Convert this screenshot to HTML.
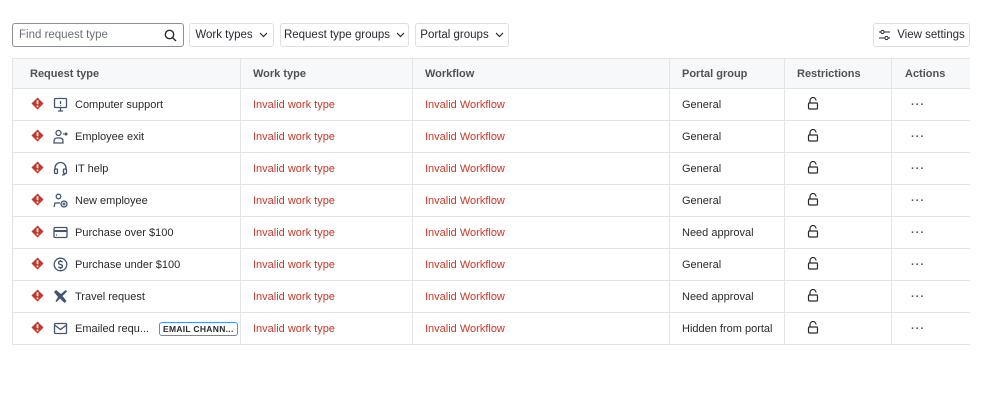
<!DOCTYPE html>
<html><head><meta charset="utf-8"><style>
*{box-sizing:border-box;margin:0;padding:0}
body{width:999px;height:407px;background:#fff;font-family:"Liberation Sans",sans-serif;font-size:11px;color:#292a2e;position:relative;overflow:hidden}
.btn{position:absolute;top:23px;height:24px;border:1px solid #dcdfe4;border-radius:3px;display:flex;align-items:center;justify-content:center;padding:0 4px;font-size:11.5px;color:#292a2e;white-space:nowrap}
.btn svg{margin-left:6px;flex:none}
.search{position:absolute;left:12px;top:23px;width:172px;height:24px;border:1px solid #8c8f97;border-radius:3px;display:flex;align-items:center;padding:0 6px;color:#6b6e76;font-size:11.5px;white-space:nowrap}
table{position:absolute;left:12px;top:58px;width:958px;border-collapse:collapse;table-layout:fixed}
th{height:30px;background:#f7f8f9;text-align:left;font-weight:bold;color:#505258;font-size:11px;padding-left:12px;border:1px solid #e3e4e6;white-space:nowrap}
td{height:32px;border:1px solid #e3e4e6;padding-left:12px;font-size:11px;white-space:nowrap;overflow:hidden}
tr>*:last-child{border-right:none}
.red{color:#c9372c}
.rt{display:flex;align-items:center;padding-left:6px}
.rt .w{width:22px}
.rt .ic{width:22px;display:flex}
.tag{margin-left:10px;border:1px solid #4c8eef;border-radius:3px;font-size:8.5px;font-weight:bold;padding:1px 3px;color:#292a2e;letter-spacing:.3px}
.dots{letter-spacing:1px;font-weight:bold;color:#505258;padding-left:19px}
</style></head><body>
<div class="search"><span style="flex:1">Find request type</span>
<svg width="13" height="13" viewBox="0 0 13 13"><circle cx="5.5" cy="5.5" r="4.2" fill="none" stroke="#292a2e" stroke-width="1.4"/><path d="M8.6 8.6L12 12" stroke="#292a2e" stroke-width="1.4"/></svg></div>
<div class="btn" style="left:189px;width:85px">Work types<svg width="9" height="6"><path d="M1 1l3.5 3.5L8 1" fill="none" stroke="#292a2e" stroke-width="1.2"/></svg></div>
<div class="btn" style="left:280px;width:129px">Request type groups<svg width="9" height="6"><path d="M1 1l3.5 3.5L8 1" fill="none" stroke="#292a2e" stroke-width="1.2"/></svg></div>
<div class="btn" style="left:415px;width:94px">Portal groups<svg width="9" height="6"><path d="M1 1l3.5 3.5L8 1" fill="none" stroke="#292a2e" stroke-width="1.2"/></svg></div>
<div class="btn" style="left:873px;width:97px"><svg width="13" height="12" style="margin:0 6px 0 0" viewBox="0 0 13 12"><path d="M1 3h11M1 9h11" stroke="#292a2e" stroke-width="1.1"/><circle cx="4.5" cy="3" r="1.6" fill="#fff" stroke="#292a2e"/><circle cx="8.5" cy="9" r="1.6" fill="#fff" stroke="#292a2e"/></svg>View settings</div>
<table>
<colgroup><col style="width:228px"><col style="width:172px"><col style="width:257px"><col style="width:115px"><col style="width:107px"><col></colgroup>
<tr><th style="padding-left:17px">Request type</th><th>Work type</th><th>Workflow</th><th>Portal group</th><th>Restrictions</th><th style="padding-left:13px">Actions</th></tr>
<tr><td><div class="rt"><span class="w"><svg width="13" height="13" viewBox="0 0 14 14"><path d="M7 0.5L13.5 7 7 13.5 0.5 7z" fill="#c9372c"/><path d="M7 3.5v4.2" stroke="#fff" stroke-width="1.8"/><circle cx="7" cy="10" r="1" fill="#fff"/></svg></span><span class="ic"><svg width="15" height="15" viewBox="0 0 15 15" fill="none" stroke="#44546f" stroke-width="1.3"><rect x="1.5" y="1.5" width="12" height="9" rx="1"/><path d="M7.5 4v3M7.5 8v.8M5 14h5M7.5 10.5V14"/></svg></span>Computer support</div></td><td class="red">Invalid work type</td><td class="red">Invalid Workflow</td><td>General</td><td><svg style="margin-left:10px" width="12" height="13" viewBox="0 0 12 13" fill="none" stroke="#292a2e" stroke-width="1.2"><path d="M3 6V3.5a3 3 0 0 1 6 0"/><rect x="1.5" y="6" width="9" height="6" rx="1"/></svg></td><td class="dots">···</td></tr>
<tr><td><div class="rt"><span class="w"><svg width="13" height="13" viewBox="0 0 14 14"><path d="M7 0.5L13.5 7 7 13.5 0.5 7z" fill="#c9372c"/><path d="M7 3.5v4.2" stroke="#fff" stroke-width="1.8"/><circle cx="7" cy="10" r="1" fill="#fff"/></svg></span><span class="ic"><svg width="15" height="15" viewBox="0 0 15 15" fill="none" stroke="#44546f" stroke-width="1.3"><circle cx="5.5" cy="4" r="2.5"/><path d="M1 14v-2a3 3 0 0 1 3-3h3a3 3 0 0 1 3 3v2zM10 5h4M12.5 3.5L14 5l-1.5 1.5"/></svg></span>Employee exit</div></td><td class="red">Invalid work type</td><td class="red">Invalid Workflow</td><td>General</td><td><svg style="margin-left:10px" width="12" height="13" viewBox="0 0 12 13" fill="none" stroke="#292a2e" stroke-width="1.2"><path d="M3 6V3.5a3 3 0 0 1 6 0"/><rect x="1.5" y="6" width="9" height="6" rx="1"/></svg></td><td class="dots">···</td></tr>
<tr><td><div class="rt"><span class="w"><svg width="13" height="13" viewBox="0 0 14 14"><path d="M7 0.5L13.5 7 7 13.5 0.5 7z" fill="#c9372c"/><path d="M7 3.5v4.2" stroke="#fff" stroke-width="1.8"/><circle cx="7" cy="10" r="1" fill="#fff"/></svg></span><span class="ic"><svg width="15" height="15" viewBox="0 0 15 15" fill="none" stroke="#44546f" stroke-width="1.3"><path d="M2 9V7a5.5 5.5 0 0 1 11 0v2"/><rect x="1.5" y="8" width="3" height="4.5" rx="1"/><rect x="10.5" y="8" width="3" height="4.5" rx="1"/><path d="M12 12.5q0 1.5-3 1.5"/></svg></span>IT help</div></td><td class="red">Invalid work type</td><td class="red">Invalid Workflow</td><td>General</td><td><svg style="margin-left:10px" width="12" height="13" viewBox="0 0 12 13" fill="none" stroke="#292a2e" stroke-width="1.2"><path d="M3 6V3.5a3 3 0 0 1 6 0"/><rect x="1.5" y="6" width="9" height="6" rx="1"/></svg></td><td class="dots">···</td></tr>
<tr><td><div class="rt"><span class="w"><svg width="13" height="13" viewBox="0 0 14 14"><path d="M7 0.5L13.5 7 7 13.5 0.5 7z" fill="#c9372c"/><path d="M7 3.5v4.2" stroke="#fff" stroke-width="1.8"/><circle cx="7" cy="10" r="1" fill="#fff"/></svg></span><span class="ic"><svg width="15" height="15" viewBox="0 0 15 15" fill="none" stroke="#44546f" stroke-width="1.3"><circle cx="5.5" cy="3.5" r="2.3"/><path d="M1 14l1-4h5"/><circle cx="11" cy="11" r="3"/><path d="M11 9.5v3M9.5 11h3"/></svg></span>New employee</div></td><td class="red">Invalid work type</td><td class="red">Invalid Workflow</td><td>General</td><td><svg style="margin-left:10px" width="12" height="13" viewBox="0 0 12 13" fill="none" stroke="#292a2e" stroke-width="1.2"><path d="M3 6V3.5a3 3 0 0 1 6 0"/><rect x="1.5" y="6" width="9" height="6" rx="1"/></svg></td><td class="dots">···</td></tr>
<tr><td><div class="rt"><span class="w"><svg width="13" height="13" viewBox="0 0 14 14"><path d="M7 0.5L13.5 7 7 13.5 0.5 7z" fill="#c9372c"/><path d="M7 3.5v4.2" stroke="#fff" stroke-width="1.8"/><circle cx="7" cy="10" r="1" fill="#fff"/></svg></span><span class="ic"><svg width="15" height="15" viewBox="0 0 15 15" fill="none" stroke="#44546f" stroke-width="1.3"><rect x="1" y="2.5" width="13" height="10" rx="1.2"/><path d="M1 6h13" stroke-width="2"/><path d="M3 10h1"/></svg></span>Purchase over $100</div></td><td class="red">Invalid work type</td><td class="red">Invalid Workflow</td><td>Need approval</td><td><svg style="margin-left:10px" width="12" height="13" viewBox="0 0 12 13" fill="none" stroke="#292a2e" stroke-width="1.2"><path d="M3 6V3.5a3 3 0 0 1 6 0"/><rect x="1.5" y="6" width="9" height="6" rx="1"/></svg></td><td class="dots">···</td></tr>
<tr><td><div class="rt"><span class="w"><svg width="13" height="13" viewBox="0 0 14 14"><path d="M7 0.5L13.5 7 7 13.5 0.5 7z" fill="#c9372c"/><path d="M7 3.5v4.2" stroke="#fff" stroke-width="1.8"/><circle cx="7" cy="10" r="1" fill="#fff"/></svg></span><span class="ic"><svg width="15" height="15" viewBox="0 0 15 15" fill="none" stroke="#44546f" stroke-width="1.3"><circle cx="7.5" cy="7.5" r="6.3"/><path d="M9.5 5.3q-.7-1-2-1-2 0-2 1.5t2 1.7 2 1.7-2 1.6q-1.4 0-2.1-1M7.5 3v1.3M7.5 10.8v1.3"/></svg></span>Purchase under $100</div></td><td class="red">Invalid work type</td><td class="red">Invalid Workflow</td><td>General</td><td><svg style="margin-left:10px" width="12" height="13" viewBox="0 0 12 13" fill="none" stroke="#292a2e" stroke-width="1.2"><path d="M3 6V3.5a3 3 0 0 1 6 0"/><rect x="1.5" y="6" width="9" height="6" rx="1"/></svg></td><td class="dots">···</td></tr>
<tr><td><div class="rt"><span class="w"><svg width="13" height="13" viewBox="0 0 14 14"><path d="M7 0.5L13.5 7 7 13.5 0.5 7z" fill="#c9372c"/><path d="M7 3.5v4.2" stroke="#fff" stroke-width="1.8"/><circle cx="7" cy="10" r="1" fill="#fff"/></svg></span><span class="ic"><svg width="15" height="15" viewBox="0 0 15 15" fill="#44546f"><path d="M1 3l2-2 5 4 4-3.5q1.5-.8 1.8.5.2.8-.8 1.6L9.5 7l4 5-2 2-4.5-4.5L3.5 13 2.5 12l2.5-4z"/></svg></span>Travel request</div></td><td class="red">Invalid work type</td><td class="red">Invalid Workflow</td><td>Need approval</td><td><svg style="margin-left:10px" width="12" height="13" viewBox="0 0 12 13" fill="none" stroke="#292a2e" stroke-width="1.2"><path d="M3 6V3.5a3 3 0 0 1 6 0"/><rect x="1.5" y="6" width="9" height="6" rx="1"/></svg></td><td class="dots">···</td></tr>
<tr><td><div class="rt"><span class="w"><svg width="13" height="13" viewBox="0 0 14 14"><path d="M7 0.5L13.5 7 7 13.5 0.5 7z" fill="#c9372c"/><path d="M7 3.5v4.2" stroke="#fff" stroke-width="1.8"/><circle cx="7" cy="10" r="1" fill="#fff"/></svg></span><span class="ic"><svg width="15" height="15" viewBox="0 0 15 15" fill="none" stroke="#44546f" stroke-width="1.3"><rect x="1.5" y="2.5" width="12" height="10" rx="1"/><path d="M1.5 4l6 4.5 6-4.5"/></svg></span>Emailed requ...<span class="tag">EMAIL CHANN...</span></div></td><td class="red">Invalid work type</td><td class="red">Invalid Workflow</td><td>Hidden from portal</td><td><svg style="margin-left:10px" width="12" height="13" viewBox="0 0 12 13" fill="none" stroke="#292a2e" stroke-width="1.2"><path d="M3 6V3.5a3 3 0 0 1 6 0"/><rect x="1.5" y="6" width="9" height="6" rx="1"/></svg></td><td class="dots">···</td></tr>
</table>
</body></html>
